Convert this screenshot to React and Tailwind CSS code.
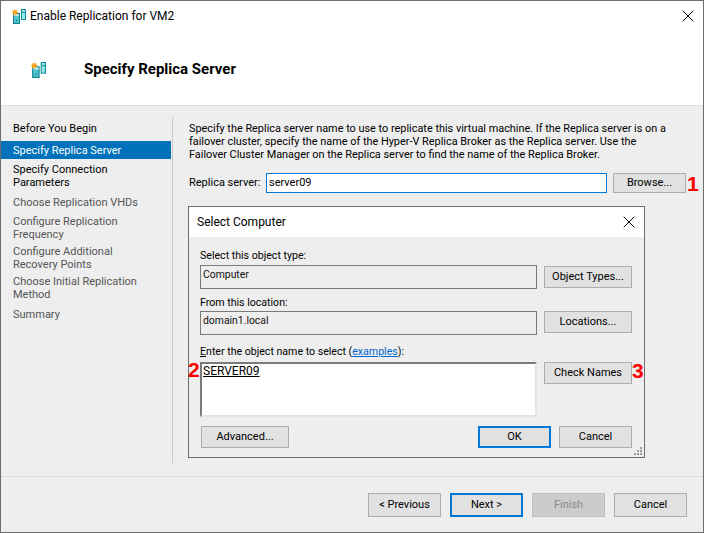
import React from "react";
import { X } from "lucide-react";

function ServerIcon({ className }) {
  return (
    <svg viewBox="0 0 15 15" className={className}>
      <rect x="2.5" y="4.5" width="6" height="10" fill="#4fc3d0" stroke="#0f7f8c" />
      <rect x="3" y="5" width="5" height="2" fill="#bfeef2" />
      <rect x="5" y="11" width="1" height="1" fill="#0b4f57" />
      <rect x="10.5" y="0.5" width="4" height="10" fill="#9be4ea" stroke="#0f8f9c" />
      <rect x="11" y="3" width="3" height="1" fill="#0f8f9c" />
      <path d="M4 0l.8 1.6L6.5 1 5.8 2.6 7.5 3.5 5.8 4.2 6.5 6 4.6 5.2 4 7 3.2 5.2 1.5 6l.6-1.8L.3 3.5l1.8-.9L1.5 1l1.7.6z" fill="#f5a623" />
    </svg>
  );
}

function Btn({ children, className = "", tone = "border border-[#adadad] bg-[#e1e1e1] text-black" }) {
  return (
    <div className={`flex items-center justify-center pt-[1px] text-[11px] ${tone} ${className}`}>
      {children}
    </div>
  );
}

const focused = "border-2 border-[#0078d7] bg-[#e1e1e1] text-black";
const disabled = "border border-[#bfbfbf] bg-[#cccccc] text-[#8a8a8a]";

function Field({ children }) {
  return (
    <div className="h-[24px] w-[337px] border border-[#7a7a7a] bg-[#eeeeee] pl-[2px] text-[10.4px] leading-[18px] text-[#111]">
      {children}
    </div>
  );
}

const steps = [
  { label: ["Before You Begin"], color: "text-black" },
  { label: ["Specify Replica Server"], active: true },
  { label: ["Specify Connection", "Parameters"], color: "text-black" },
  { label: ["Choose Replication VHDs"] },
  { label: ["Configure Replication", "Frequency"] },
  { label: ["Configure Additional", "Recovery Points"] },
  { label: ["Choose Initial Replication", "Method"] },
  { label: ["Summary"] },
];

function SelectComputer() {
  return (
    <div className="absolute left-[187px] top-[205px] flex h-[252px] w-[457px] flex-col border border-[#6e6e6e] bg-[#eeeeee]">
      <div className="flex h-[30px] items-center justify-between bg-white pl-[8px] pr-[5px] text-[12px] text-black">
        <span>Select Computer</span>
        <X size={20} strokeWidth={1.2} />
      </div>
      <div className="flex flex-1 flex-col pl-[11px] pr-[12px] pt-[10px]">
        <div className="flex justify-between">
          <div>
            <div className="mb-[2px] h-[16px] text-[10.6px] leading-[18px]">Select this object type:</div>
            <Field>Computer</Field>
          </div>
          <Btn className="mt-[19px] h-[22px] w-[88px]">Object Types...</Btn>
        </div>
        <div className="mt-[5px] flex justify-between">
          <div>
            <div className="mb-[1px] h-[16px] text-[10.6px] leading-[18px]">From this location:</div>
            <Field>domain1.local</Field>
          </div>
          <Btn className="mt-[17px] h-[22px] w-[88px]">Locations...</Btn>
        </div>
        <div className="mt-[8px] h-[19px] text-[10.6px] leading-[18px]">
          <span className="underline">E</span>nter the object name to select (<span className="text-[#0066cc] underline">examples</span>):
        </div>
        <div className="flex justify-between">
          <div className="h-[55px] w-[337px] border-2 border-b-[#e4e4e4] border-l-[#7a7a7a] border-r-[#e4e4e4] border-t-[#7a7a7a] bg-white pl-[1px] text-[12px] leading-[14px] text-black">
            <span className="underline">SERVER09</span>
          </div>
          <Btn className="h-[22px] w-[88px]">Check Names</Btn>
        </div>
        <div className="mt-[9px] flex items-center justify-between">
          <Btn className="ml-[1px] h-[22px] w-[88px]">Advanced...</Btn>
          <div className="flex gap-[8px]">
            <Btn className="h-[22px] w-[73px]" tone={focused}>OK</Btn>
            <Btn className="h-[22px] w-[73px]">Cancel</Btn>
          </div>
        </div>
      </div>
      <svg viewBox="0 0 8 8" className="absolute bottom-[2px] right-[2px] h-[8px] w-[8px]" fill="#9a9a9a">
        <rect x="6" y="0" width="2" height="2" />
        <rect x="3" y="3" width="2" height="2" />
        <rect x="6" y="3" width="2" height="2" />
        <rect x="0" y="6" width="2" height="2" />
        <rect x="3" y="6" width="2" height="2" />
        <rect x="6" y="6" width="2" height="2" />
      </svg>
    </div>
  );
}

export default function App() {
  return (
    <div
      className="relative flex h-[533px] w-[704px] flex-col overflow-hidden border border-[#6e6e6e] bg-[#eeeeee] text-black"
      style={{ fontFamily: 'Roboto, sans-serif' }}
    >
      <div className="flex h-[29px] items-center justify-between bg-white pl-[10px] pr-[5px] pt-[1px]">
        <div className="flex items-center gap-[4px] text-[12px]">
          <ServerIcon className="h-[15px] w-[15px]" />
          <span>Enable Replication for VM2</span>
        </div>
        <X size={20} strokeWidth={1.2} />
      </div>
      <div className="flex h-[76px] items-center border-b border-[#dcdcdc] bg-white pl-[29px] pt-[4px]">
        <ServerIcon className="h-[16px] w-[16px]" />
        <span className="ml-[38px] text-[15px] font-bold">Specify Replica Server</span>
      </div>
      <div className="flex flex-1 flex-col">
        <div className="flex h-[370px] pt-[11px]">
          <div className="flex h-[346px] w-[172px] shrink-0 flex-col gap-[4px] border-r border-[#c9c9c9] pt-[2px] text-[11px] leading-[13px]">
            {steps.map((s, i) => (
              <div
                key={i}
                className={`mr-[1px] pl-[12px] ${s.label.length === 1 ? "flex h-[18px] items-center" : ""} ${s.active ? "bg-[#0072bc] text-white" : s.color || "text-[#555]"}`}
              >
                <div>
                  {s.label.map((l) => (
                    <div key={l}>{l}</div>
                  ))}
                </div>
              </div>
            ))}
          </div>
          <div className="flex-1 pl-[16px] pr-[15px] pt-[5px]">
            <p className="max-w-[482px] text-[10.9px] leading-[13px]">
              Specify the Replica server name to use to replicate this virtual machine. If the Replica server is on a failover cluster, specify the name of the Hyper-V Replica Broker as the Replica server. Use the Failover Cluster Manager on the Replica server to find the name of the Replica Broker.
            </p>
            <div className="mt-[12px] flex items-center">
              <span className="w-[77px] whitespace-nowrap text-[11px]">Replica server:</span>
              <div className="h-[20px] w-[341px] border border-[#0078d7] bg-white pl-[2px] text-[11px] leading-[18px]">server09</div>
              <Btn className="ml-[6px] h-[20px] w-[73px]">Browse...</Btn>
            </div>
          </div>
        </div>
        <div className="flex h-[56px] items-start justify-end gap-[9px] border-t border-[#dfdfdf] pr-[16px] pt-[16px]">
          <Btn className="h-[24px] w-[73px]">&lt; Previous</Btn>
          <Btn className="h-[24px] w-[73px]" tone={focused}>Next &gt;</Btn>
          <Btn className="h-[24px] w-[73px]" tone={disabled}>Finish</Btn>
          <Btn className="h-[24px] w-[73px]">Cancel</Btn>
        </div>
      </div>
      <SelectComputer />
      <span className="absolute left-[686px] top-[172px] text-[21px] font-bold leading-[22px] text-[#ff0000]" style={{ fontFamily: '"Liberation Sans", sans-serif' }}>1</span>
      <span className="absolute left-[187px] top-[358px] text-[21px] font-bold leading-[22px] text-[#ff0000]" style={{ fontFamily: '"Liberation Sans", sans-serif' }}>2</span>
      <span className="absolute left-[631px] top-[359px] text-[21px] font-bold leading-[22px] text-[#ff0000]" style={{ fontFamily: '"Liberation Sans", sans-serif' }}>3</span>
    </div>
  );
}
